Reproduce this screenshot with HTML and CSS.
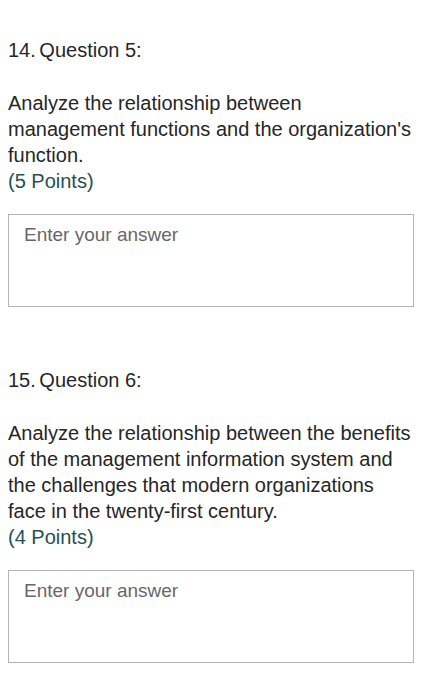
FILE: index.html
```html
<!DOCTYPE html>
<html>
<head>
<meta charset="utf-8">
<link rel="stylesheet" href="styles.css">
</head>
<body>
<main class="form">
  <section class="question">
    <div class="q-title"><span class="q-num">14.</span> Question 5:</div>
    <div class="q-text">Analyze the relationship between management functions and the organization's function.</div>
    <div class="q-points">(5 Points)</div>
    <div class="answer">Enter your answer</div>
  </section>
  <section class="question">
    <div class="q-title"><span class="q-num">15.</span> Question 6:</div>
    <div class="q-text">Analyze the relationship between the benefits of the management information system and the challenges that modern organizations face in the twenty-first century.</div>
    <div class="q-points">(4 Points)</div>
    <div class="answer">Enter your answer</div>
  </section>
</main>
</body>
</html>
```
FILE: styles.css
```css
html, body {
  margin: 0;
  padding: 0;
  background: #ffffff;
}
body {
  font-family: "Liberation Sans", Arial, sans-serif;
  color: #262626;
}
.form {
  display: flex;
  flex-direction: column;
  gap: 60px;
  padding: 37px 17px 0 8px;
}
.question {
  display: flex;
  flex-direction: column;
}
.q-title {
  font-size: 20px;
  line-height: 26px;
  margin-bottom: 27px;
}
.q-num {
  margin-right: -2px;
}
.q-text {
  font-size: 20px;
  line-height: 26px;
}
.q-points {
  font-size: 20px;
  line-height: 26px;
  color: #1f5252;
}
.answer {
  margin-top: 20px;
  height: 93px;
  box-sizing: border-box;
  border: 1.5px solid #b5b5b5;
  padding: 9px 15px;
  font-size: 19px;
  line-height: 22px;
  color: #676767;
}
```
